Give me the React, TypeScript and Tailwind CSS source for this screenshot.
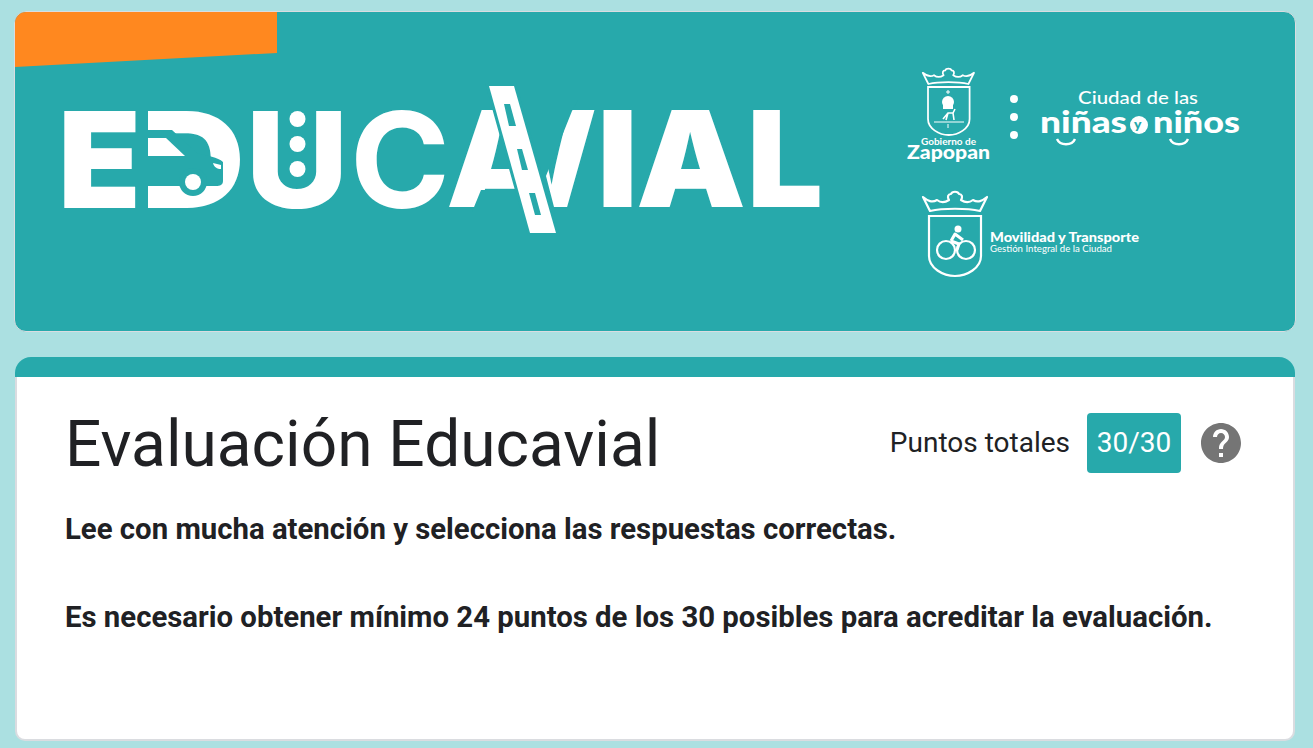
import React from 'react';

const TEAL = '#27a9ab';

const Crown = ({ x, y, scale }: { x: number; y: number; scale: number }) => (
  <path
    transform={`translate(${x} ${y}) scale(${scale})`}
    d="M1 6 C6 10 10 12 15 9 C20 13 24 11 27 9 C25 6 26 3 29 3 C30 0 36 0 37 3 C40 3 41 6 39 9 C42 11 46 13 51 9 C56 12 60 10 65 6 L58 20 C45 17 21 17 8 20 Z"
    fill="none"
    stroke="white"
    strokeWidth={2.2}
    strokeLinejoin="round"
  />
);

const Shield = ({ x, y, scale }: { x: number; y: number; scale: number }) => (
  <path
    transform={`translate(${x} ${y}) scale(${scale})`}
    d="M0 0 H52 V40 C52 52 38 60 26 60 C14 60 0 52 0 40 Z"
    fill="none"
    stroke="white"
    strokeWidth={2.2}
  />
);

// the big wordmark: real letters, with the car, lights and road drawn over them
const Wordmark = () => (
  <g className="fill-white font-['Inter'] font-black text-[133px]">
    <text x={58} y={208} textLength={83} lengthAdjust="spacingAndGlyphs">E</text>
    <text x={139} y={208} textLength={106} lengthAdjust="spacingAndGlyphs">D</text>
    <text x={245} y={208} textLength={104} lengthAdjust="spacingAndGlyphs" className="font-extrabold">U</text>
    <text x={350} y={208} textLength={100} lengthAdjust="spacingAndGlyphs" className="font-bold">C</text>
    <text x={446} y={207} textLength={110} lengthAdjust="spacingAndGlyphs">A</text>
    <text x={505} y={207} textLength={92} lengthAdjust="spacingAndGlyphs">V</text>
    <text x={597} y={207} textLength={41} lengthAdjust="spacingAndGlyphs">I</text>
    <text x={636} y={207} textLength={110} lengthAdjust="spacingAndGlyphs">A</text>
    <text x={747} y={207} textLength={76} lengthAdjust="spacingAndGlyphs">L</text>

    {/* car cut out of the D */}
    <path d="M140 130 H172 L197 153 C207 156 218 157 223 162 V181 C223 185 220 186 216 186 H140 Z" fill={TEAL} />
    <path d="M140 138 H166 L185 156 H140 Z" fill="white" />
    <circle cx={193} cy={182} r={14} fill={TEAL} />
    <circle cx={193} cy={182} r={8} fill="white" />
    <path d="M213 163 L221 165 V169 C217 169 214 167 213 163 Z" fill="white" />
    <rect x={140} y={105} width={8} height={108} fill={TEAL} />

    {/* traffic light in the U */}
    <circle cx={297.5} cy={119} r={8} />
    <circle cx={297.5} cy={144} r={8} />
    <circle cx={297.5} cy={169} r={8} />

    {/* clean the A and V where the road passes */}
    <path d="M481 190 H540 V212 H472 Z" fill={TEAL} />
    <path d="M505 100 H578 L572 111 L546 176 L554 207 L556 233 H530 Z" fill={TEAL} />

    {/* road */}
    <path d="M489 86 H514 L556 233 H530 Z" stroke={TEAL} strokeWidth={6} paintOrder="stroke" />
    <path d="M504 104 H510 L516 126 H509 Z" fill={TEAL} />
    <path d="M517 149 H522 L528 170 H522 Z" fill={TEAL} />
    <path d="M529 193 H535 L541 215 H535 Z" fill={TEAL} />
  </g>
);

const ZapopanLogo = () => (
  <g className="fill-white">
    <Crown x={922} y={68} scale={0.8} />
    <Shield x={928} y={87} scale={0.8} />
    <path d="M948 90 v4 M946 92 h4" stroke="white" strokeWidth={1} />
    <circle cx={948} cy={102} r={6} />
    <rect x={943} y={104} width={10} height={5} />
    <path d="M943 119 L948 113 L953 113 L955 109 M948 113 L946 120 M953 113 L954 120" fill="none" stroke="white" strokeWidth={1.6} />
    <path d="M934 122 H964 M948 124 V128" stroke="white" strokeWidth={1} />
    <text x={921} y={145} textLength={55} lengthAdjust="spacingAndGlyphs" className="font-['Lato'] font-bold text-[10px]">Gobierno de</text>
    <text x={907} y={159} textLength={83} lengthAdjust="spacingAndGlyphs" className="font-['Lato'] font-black text-[18px]">Zapopan</text>
    <circle cx={1014} cy={99} r={4} />
    <circle cx={1014} cy={117} r={4} />
    <circle cx={1014} cy={135} r={4} />
    <text x={1078} y={104} textLength={120} lengthAdjust="spacingAndGlyphs" className="font-['Lato'] font-medium text-[17px]">Ciudad de las</text>
    <text x={1040} y={133} textLength={87} lengthAdjust="spacingAndGlyphs" className="font-['Lato'] font-black text-[31px]">niñas</text>
    <circle cx={1139} cy={125} r={9} />
    <text x={1134} y={129} className="font-['Lato'] font-black text-[14px]" fill={TEAL}>y</text>
    <text x={1153} y={133} textLength={87} lengthAdjust="spacingAndGlyphs" className="font-['Lato'] font-black text-[31px]">niños</text>
    <path d="M1057 139 C1060 146 1072 146 1075 139" fill="none" stroke="white" strokeWidth={2.4} />
    <path d="M1170 139 C1173 146 1185 146 1188 139" fill="none" stroke="white" strokeWidth={2.4} />
  </g>
);

const MovilidadLogo = () => (
  <g className="fill-white">
    <Crown x={922} y={191} scale={1} />
    <Shield x={929} y={216} scale={1} />
    <circle cx={946} cy={250} r={9} fill="none" stroke="white" strokeWidth={2.2} />
    <circle cx={966} cy={250} r={9} fill="none" stroke="white" strokeWidth={2.2} />
    <circle cx={958} cy={229} r={3.5} />
    <path d="M951 241 L955 234 L963 240 M951 241 L959 244 L957 250" fill="none" stroke="white" strokeWidth={3} strokeLinejoin="round" />
    <text x={990} y={242} textLength={149} lengthAdjust="spacingAndGlyphs" className="font-['Lato'] font-black text-[13px]">Movilidad y Transporte</text>
    <text x={990} y={252} textLength={122} lengthAdjust="spacingAndGlyphs" className="font-['Lato'] text-[9px]">Gestión Integral de la Ciudad</text>
  </g>
);

const App = () => {
  return (
    <div className="h-[748px] overflow-hidden bg-[#abe0e1] pt-[11px] pl-[14px] pr-[17px] font-['Roboto',sans-serif] text-[#202124]">
      {/* Banner */}
      <div className="h-[321px] overflow-hidden rounded-[12px] border border-[#dadce0] bg-[#27a9ab]">
        <svg viewBox="15 12 1280 319" className="block h-[319px] w-[1280px]">
          <path d="M15 12 H277 V53 L15 67 Z" fill="#ff881f" />
          <Wordmark />
          <ZapopanLogo />
          <MovilidadLogo />
        </svg>
      </div>

      {/* Card */}
      <div className="mt-[25px] ml-px w-[1280px]">
        <div className="h-[20px] rounded-t-[16px] bg-[#27a9ab]" />
        <div className="h-[364px] rounded-b-[10px] border-x-2 border-b-2 border-[#dadce0] bg-white pl-[48px] pr-[48px]">
          <div className="flex items-start justify-between pt-[36px]">
            <h1 className="mt-[2px] text-[64px] leading-[60px] font-normal">Evaluación Educavial</h1>
            <div className="flex items-center">
              <span className="text-[28px]">Puntos totales</span>
              <span className="ml-[17px] flex h-[60px] w-[94px] items-center justify-center rounded-[4px] bg-[#27a9ab] text-[28px] text-white">
                30/30
              </span>
              <svg viewBox="0 0 24 24" className="ml-[16px] h-[48px] w-[48px] fill-[#757575]">
                <path d="M12 2C6.48 2 2 6.48 2 12s4.48 10 10 10 10-4.48 10-10S17.52 2 12 2zm1 17h-2v-2h2v2zm2.07-7.75l-.9.92C13.45 12.9 13 13.5 13 15h-2v-.5c0-1.1.45-2.1 1.17-2.83l1.24-1.26c.37-.36.59-.86.59-1.41 0-1.1-.9-2-2-2s-2 .9-2 2H8c0-2.21 1.79-4 4-4s4 1.79 4 4c0 .88-.36 1.68-.93 2.25z" />
              </svg>
            </div>
          </div>
          <div className="mt-[32px] text-[29.33px] leading-[44px] font-bold">
            <p>Lee con mucha atención y selecciona las respuestas correctas.</p>
            <p className="mt-[44px]">Es necesario obtener mínimo 24 puntos de los 30 posibles para acreditar la evaluación.</p>
          </div>
        </div>
      </div>
    </div>
  );
};

export default App;
